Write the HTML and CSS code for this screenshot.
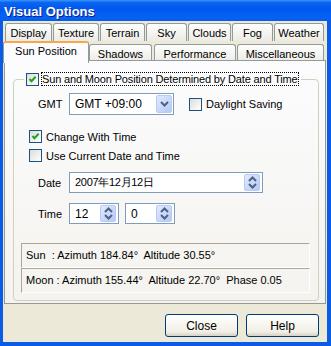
FILE: index.html
```html
<!DOCTYPE html>
<html lang="en">
<head>
  <meta charset="UTF-8">
  <title>Visual Options</title>
  <link rel="stylesheet" href="styles.css">
</head>
<body>
  <div class="window">
    <div class="titlebar">Visual Options</div>
    <div class="client">
      <div class="tabs">
        <div class="tab-row row-back">
          <div class="tab t-display">Display</div>
          <div class="tab t-texture">Texture</div>
          <div class="tab t-terrain">Terrain</div>
          <div class="tab t-sky">Sky</div>
          <div class="tab t-clouds">Clouds</div>
          <div class="tab t-fog">Fog</div>
          <div class="tab t-weather">Weather</div>
        </div>
        <div class="tab-row row-front">
          <div class="tab active t-sun">Sun Position</div>
          <div class="tab t-shadows">Shadows</div>
          <div class="tab t-perf">Performance</div>
          <div class="tab t-misc">Miscellaneous</div>
        </div>
      </div>

      <div class="panel">
        <fieldset class="group">
          <legend>
            <span class="check">
              <svg width="11" height="11" viewBox="0 0 11 11"><path d="M2.5 5 L4.5 7.2 L8.6 2.8" fill="none" stroke="#21a121" stroke-width="2"/></svg>
            </span>
            <span class="focus">Sun and Moon Position Determined by Date and Time</span>
          </legend>

          <div class="row gmt-row">
            <span class="label">GMT</span>
            <div class="combo">
              <span class="value">GMT +09:00</span>
              <span class="drop">
                <svg width="9" height="6" viewBox="0 0 9 6"><path d="M1 1 L4.5 4.5 L8 1" fill="none" stroke="#4d6185" stroke-width="2"/></svg>
              </span>
            </div>
            <label class="cb daylight"><span class="check"></span>Daylight Saving</label>
          </div>

          <label class="cb change">
            <span class="check">
              <svg width="11" height="11" viewBox="0 0 11 11"><path d="M2.5 5 L4.5 7.2 L8.6 2.8" fill="none" stroke="#21a121" stroke-width="2"/></svg>
            </span>Change With Time
          </label>
          <label class="cb current"><span class="check"></span>Use Current Date and Time</label>

          <div class="row date-row">
            <span class="label">Date</span>
            <div class="field date-field">
              <span class="value date-value">2007年12月12日</span>
              <span class="spin">
                <svg width="9" height="13" viewBox="0 0 9 13"><path d="M1 5 L4.5 1.5 L8 5 M1 8 L4.5 11.5 L8 8" fill="none" stroke="#4d6185" stroke-width="2"/></svg>
              </span>
            </div>
          </div>

          <div class="row time-row">
            <span class="label">Time</span>
            <div class="field time-field">
              <span class="value">12</span>
              <span class="spin">
                <svg width="9" height="13" viewBox="0 0 9 13"><path d="M1 5 L4.5 1.5 L8 5 M1 8 L4.5 11.5 L8 8" fill="none" stroke="#4d6185" stroke-width="2"/></svg>
              </span>
            </div>
            <div class="field time-field minutes">
              <span class="value">0</span>
              <span class="spin">
                <svg width="9" height="13" viewBox="0 0 9 13"><path d="M1 5 L4.5 1.5 L8 5 M1 8 L4.5 11.5 L8 8" fill="none" stroke="#4d6185" stroke-width="2"/></svg>
              </span>
            </div>
          </div>

          <div class="info sun-info">Sun  : Azimuth 184.84°  Altitude 30.55°</div>
          <div class="info">Moon : Azimuth 155.44°  Altitude 22.70°  Phase 0.05</div>
        </fieldset>
      </div>

      <div class="footer">
        <button class="btn">Close</button>
        <button class="btn">Help</button>
      </div>
    </div>
  </div>
</body>
</html>
```

FILE: styles.css
```css
body {
  margin: 0;
  font-family: 'Liberation Sans', Arial, sans-serif;
  font-size: 11px;
  color: #000;
}

.window {
  width: 331px;
  height: 346px;
  box-sizing: border-box;
  background: #0a5ce6;
  padding: 0 4px 4px 3px;
  display: flex;
  flex-direction: column;
}

.titlebar {
  height: 21px;
  margin: 0 -4px 0 -3px;
  padding-left: 4px;
  line-height: 23px;
  font-size: 13px;
  font-weight: bold;
  color: #fff;
  text-shadow: 1px 1px 0 #0a1e8a;
  background: linear-gradient(#3d95ff 0%, #0a66f0 12%, #0058ee 40%, #0562f7 85%, #0a5ce6 100%);
}

.client {
  flex: 1;
  background: #ece9d8;
  display: flex;
  flex-direction: column;
}

/* tabs */
.tabs {
  height: 39px;
}

.tab-row {
  display: flex;
}

.row-back {
  margin-top: 2px;
  padding-left: 2px;
  gap: 1px;
  height: 18px;
}

.row-front {
  height: 21px;
  align-items: flex-end;
}

.tab {
  box-sizing: border-box;
  height: 18px;
  border: 1px solid #919b9c;
  border-bottom: none;
  border-radius: 3px 3px 0 0;
  background: linear-gradient(#fefefe, #ecebe5);
  text-align: center;
  line-height: 18px;
}

.t-display { width: 47px; }
.t-texture { width: 46px; }
.t-terrain { width: 45px; }
.t-sky { width: 41px; }
.t-clouds { width: 43px; }
.t-fog { width: 41px; }
.t-weather { width: 50px; }

.t-sun { width: 86px; }
.t-shadows { width: 63px; }
.t-perf { width: 82px; margin-left: 2px; }
.t-misc { width: 87px; margin-left: 1px; }

.tab.active {
  position: relative;
  z-index: 1;
  height: 22px;
  margin-bottom: -1px;
  border-top: 2px solid #f7a84a;
  background: #fcfcfe;
  line-height: 17px;
}

/* panel */
.panel {
  box-sizing: border-box;
  height: 244px;
  width: 322px;
  margin-left: 1px;
  border: 1px solid #919b9c;
  background: linear-gradient(#fcfcfe, #f4f3ee);
  padding: 10px 6px 0 8px;
}

.group {
  margin: 0;
  padding: 0 0 7px 0;
  height: 230px;
  box-sizing: border-box;
  border: 1px solid #d0d0bf;
  border-radius: 4px;
}

.group legend {
  margin-left: 10px;
  padding: 0 2px;
  height: 16px;
  display: flex;
  align-items: center;
  gap: 2px;
}

.focus {
  border: 1px dotted #000;
  line-height: 12px;
  letter-spacing: -0.15px;
}

.check {
  box-sizing: border-box;
  width: 13px;
  height: 13px;
  border: 1px solid #1c5180;
  background: linear-gradient(135deg, #dcdcd7, #fff);
  display: inline-flex;
  flex-shrink: 0;
}

.row {
  display: flex;
  align-items: center;
  padding-left: 24px;
}

.label {
  width: 31px;
}

.gmt-row {
  margin-top: 6px;
  height: 22px;
}

.combo, .field {
  box-sizing: border-box;
  border: 1px solid #7f9db9;
  background: #fff;
  display: flex;
  align-items: center;
  justify-content: space-between;
  padding-left: 5px;
}

.combo {
  width: 105px;
  height: 22px;
  padding-right: 1px;
}

.combo .value {
  font-size: 12px;
}

.drop, .spin {
  box-sizing: border-box;
  width: 16px;
  border: 1px solid #b8cbf4;
  border-radius: 2px;
  background: linear-gradient(135deg, #e2ebfe, #b4c8f6);
  display: flex;
  align-items: center;
  justify-content: center;
}

.drop {
  height: 18px;
}

.cb {
  display: flex;
  align-items: center;
  gap: 4px;
  height: 13px;
}

.daylight {
  margin-left: 15px;
}

.change {
  margin: 15px 0 0 15px;
}

.current {
  margin: 6px 0 0 15px;
}

.date-row {
  margin-top: 10px;
}

.field {
  height: 21px;
  padding-right: 2px;
  font-size: 12px;
}

.date-value {
  font-size: 11px;
  letter-spacing: -0.3px;
}

.field .spin {
  height: 17px;
}

.date-field {
  width: 194px;
}

.time-row {
  margin-top: 10px;
}

.time-field {
  width: 50px;
}

.minutes {
  margin-left: 6px;
}

.info {
  box-sizing: border-box;
  height: 25px;
  margin: 0 8px 0 7px;
  border: 1px solid;
  border-color: #aca899 #fff #fff #aca899;
  padding-left: 4px;
  line-height: 23px;
  white-space: pre;
}

.sun-info {
  margin-top: 19px;
}

/* buttons */
.footer {
  display: flex;
  justify-content: flex-end;
  gap: 8px;
  padding: 10px 8px 0 0;
}

.btn {
  width: 73px;
  height: 23px;
  border: 1px solid #003c74;
  border-radius: 3px;
  background: linear-gradient(#fff, #f1efe6 80%, #d6d0c5);
  font-family: 'Liberation Sans', Arial, sans-serif;
  font-size: 12px;
  color: #000;
  padding: 0;
}
```
